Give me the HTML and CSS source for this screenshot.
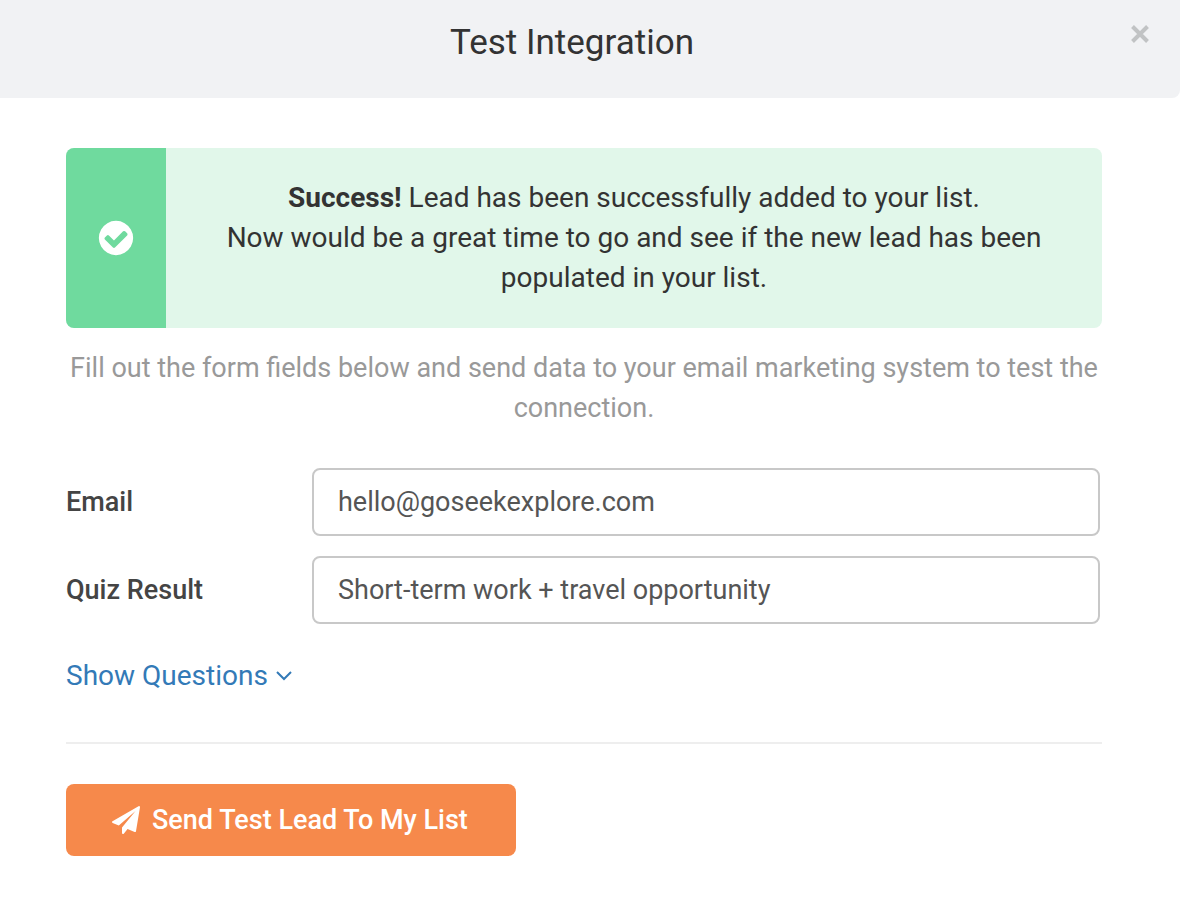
FILE: index.html
```
<!DOCTYPE html>
<html lang="en">
<head>
    <meta charset="UTF-8">
    <meta name="viewport" content="width=device-width, initial-scale=1.0">
    <title>Test Integration</title>
    <link rel="stylesheet" href="styles.css">
</head>
<body>
<!-- Modal header -->
<header class="modal-header">
    <h1>Test Integration</h1>
    <button type="button" class="close" aria-label="Close">
        <svg class="close-icon" viewBox="0 0 18 18" aria-hidden="true"><path d="M1.500 1.500l15 15M16.500 1.500l-15 15"/></svg>
    </button>
</header>

<!-- Modal body -->
<main class="modal-body">
    <div class="alert" role="status">
        <div class="alert-icon">
            <svg viewBox="0 0 1792 1792" aria-hidden="true"><path d="M1412 734q0-28-18-46l-91-90q-19-19-45-19t-45 19l-408 407-226-226q-19-19-45-19t-45 19l-91 90q-18 18-18 46 0 27 18 45l362 362q19 19 45 19 27 0 46-19l543-543q18-18 18-45zm252 162q0 209-103 385.500t-279.500 279.500-385.500 103-385.500-103-279.500-279.500-103-385.500 103-385.500 279.500-279.500 385.500-103 385.500 103 279.500 279.500 103 385.500z"/></svg>
        </div>
        <p class="alert-text"><strong>Success!</strong> Lead has been successfully added to your list.<br>Now would be a great time to go and see if the new lead has been populated in your list.</p>
    </div>

    <p class="intro">Fill out the form fields below and send data to your email marketing system to test the connection.</p>

    <form class="test-form">
        <div class="form-row">
            <label for="email">Email</label>
            <input type="email" id="email" value="hello@goseekexplore.com">
        </div>
        <div class="form-row">
            <label for="quiz-result">Quiz Result</label>
            <input type="text" id="quiz-result" value="Short-term work + travel opportunity">
        </div>

        <a href="#" class="show-questions">Show Questions
            <svg viewBox="0 0 16 10" aria-hidden="true"><path d="M1 1l7 7 7-7"/></svg>
        </a>

        <hr>

        <button type="submit" class="send-btn">
            <svg viewBox="0 0 1792 1792" aria-hidden="true"><path d="M1764 11q33 24 27 64l-256 1536q-5 29-32 45-14 8-31 8-11 0-24-5l-453-185-242 295q-18 23-49 23-13 0-22-4-19-7-30.500-23.500t-11.500-36.500v-349l864-1059-1069 925-395-162q-37-14-40-55-2-40 32-59l1664-960q15-9 32-9 20 0 36 11z"/></svg>
            Send Test Lead To My List
        </button>
    </form>
</main>
</body>
</html>
```
FILE: styles.css
```
* {
    margin: 0;
    padding: 0;
    box-sizing: border-box;
}

body {
    font-family: Roboto, "Liberation Sans", sans-serif;
    font-size: 27px;
    line-height: 40px;
    color: #333;
    background-color: #fff;
}

input,
button {
    font-family: inherit;
    font-size: inherit;
}

/* Header */
.modal-header {
    display: flex;
    align-items: flex-start;
    padding: 22px 30px 34px 14px;
    background-color: #f1f2f4;
    border-bottom-right-radius: 8px;
}

.modal-header h1 {
    flex: 1;
    font-size: 35px;
    font-weight: 400;
    line-height: 42px;
    text-align: center;
}

.close {
    width: 20px;
    height: 24px;
    display: flex;
    align-items: center;
    justify-content: center;
    background: none;
    border: none;
    cursor: pointer;
}

.close-icon {
    width: 18px;
    height: 18px;
    fill: none;
    stroke: #c1c3c4;
    stroke-width: 4;
}

/* Body */
.modal-body {
    padding: 50px 78px 46px 66px;
}

.alert {
    display: flex;
    border-radius: 8px;
    background-color: #e1f7ea;
    overflow: hidden;
}

.alert-icon {
    flex: 0 0 100px;
    display: flex;
    align-items: center;
    justify-content: center;
    background-color: #6fda9e;
}

.alert-icon svg {
    width: 40px;
    height: 40px;
    fill: #fff;
}

.alert-text {
    flex: 1;
    padding: 30px 50px;
    font-size: 28px;
    text-align: center;
}

.intro {
    margin: 20px 0 40px;
    color: #999;
    text-align: center;
}

/* Form */
.form-row {
    display: flex;
    align-items: center;
    margin-bottom: 20px;
    padding-right: 2px;
}

.form-row label {
    flex: 0 0 246px;
    font-weight: 500;
    color: #444;
}

.form-row input {
    flex: 1;
    min-width: 0;
    height: 68px;
    padding: 0 24px;
    color: #555;
    background-color: #fff;
    border: 2px solid #c8c8c8;
    border-radius: 8px;
}

.show-questions {
    display: inline-flex;
    align-items: center;
    gap: 8px;
    margin-top: 12px;
    font-size: 28px;
    color: #337ab7;
    text-decoration: none;
}

.show-questions svg {
    width: 16px;
    height: 10px;
    fill: none;
    stroke: currentColor;
    stroke-width: 2;
}

hr {
    margin: 46px 0 40px;
    border: none;
    border-top: 2px solid #eee;
}

.send-btn {
    display: flex;
    align-items: center;
    gap: 12px;
    height: 72px;
    padding: 0 48px 0 46px;
    font-weight: 500;
    color: #fff;
    background-color: #f6894b;
    border: none;
    border-radius: 8px;
    cursor: pointer;
}

.send-btn svg {
    width: 28px;
    height: 28px;
    fill: #fff;
}
```
